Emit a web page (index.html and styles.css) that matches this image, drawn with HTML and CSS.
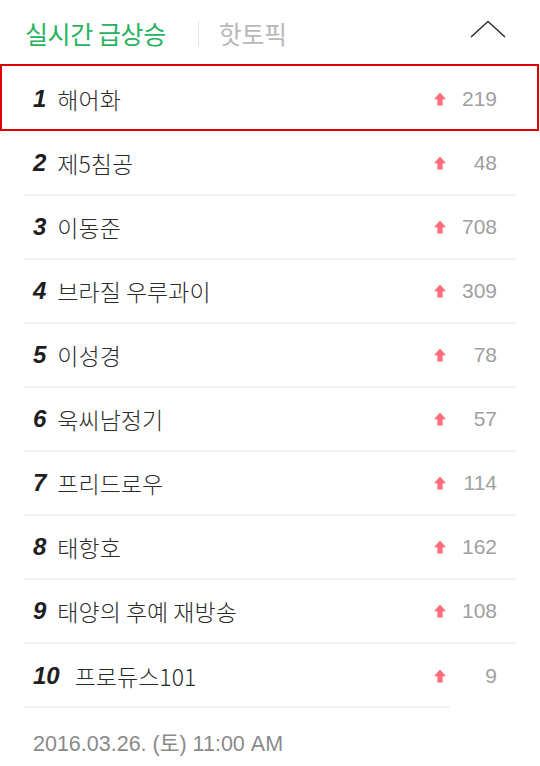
FILE: index.html
```html
<html>

<head>
    <meta charset="utf-8">
    <link rel="stylesheet" href="styles.css">
</head>

<body>
    <div class="panel">
        <div class="tabs">
            <span class="tab active">실시간 급상승</span>
            <span class="bar"></span>
            <span class="tab">핫토픽</span>
            <svg class="fold" width="36" height="18" viewBox="0 0 36 18">
                <polyline points="1,17 18,1.5 35,17" fill="none" stroke="#333" stroke-width="1.6" />
            </svg>
        </div>
        <ul class="ranking">
            <li class="picked"><b>1</b><span class="word">해어화</span><i class="up"></i><span class="cnt">219</span></li>
            <li><b>2</b><span class="word">제5침공</span><i class="up"></i><span class="cnt">48</span></li>
            <li><b>3</b><span class="word">이동준</span><i class="up"></i><span class="cnt">708</span></li>
            <li><b>4</b><span class="word">브라질 우루과이</span><i class="up"></i><span class="cnt">309</span></li>
            <li><b>5</b><span class="word">이성경</span><i class="up"></i><span class="cnt">78</span></li>
            <li><b>6</b><span class="word">욱씨남정기</span><i class="up"></i><span class="cnt">57</span></li>
            <li><b>7</b><span class="word">프리드로우</span><i class="up"></i><span class="cnt">114</span></li>
            <li><b>8</b><span class="word">태항호</span><i class="up"></i><span class="cnt">162</span></li>
            <li><b>9</b><span class="word">태양의 후예 재방송</span><i class="up"></i><span class="cnt">108</span></li>
            <li><b>10</b><span class="word">프로듀스101</span><i class="up"></i><span class="cnt">9</span></li>
        </ul>
        <div class="stamp">2016.03.26. (토) 11:00 AM</div>
    </div>
</body>

</html>
```

FILE: styles.css
```css
body {
    margin: 0;
    background: #fff;
    font-family: "Liberation Sans", "Noto Sans CJK KR", sans-serif;
}

.panel {
    width: 540px;
}

.tabs {
    height: 64px;
    display: flex;
    align-items: center;
    padding: 2px 34px 0 25px;
    box-sizing: border-box;
}

.tab {
    font-family: "Noto Sans CJK KR", sans-serif;
    font-size: 25px;
    font-weight: 400;
    color: #b8b8b8;
    letter-spacing: -0.4px;
}

.tab.active {
    color: #27b35c;
}

.bar {
    width: 1px;
    height: 25px;
    background: #e2e2e2;
    margin: 0 20px 0 32px;
}

.fold {
    margin-left: auto;
    margin-top: -8px;
}

.ranking {
    list-style: none;
    margin: 0;
    padding: 0 24px;
}

.ranking li {
    position: relative;
    height: 62px;
    display: flex;
    align-items: center;
    padding: 0 19px 0 9px;
    border-bottom: 2px solid #f3f3f3;
}

.ranking li.picked {
    height: 66px;
    border-bottom: none;
    margin-top: 2px;
}

.ranking li.picked::before {
    content: "";
    position: absolute;
    left: -24px;
    right: -23px;
    top: -2px;
    bottom: 1px;
    border: 2.5px solid #e00000;
}

.ranking li:last-child {
    border-bottom: none;
    height: 64px;
}

.ranking li:last-child::after {
    content: "";
    position: absolute;
    left: 0;
    bottom: 0;
    width: 426px;
    height: 2px;
    background: #f3f3f3;
}

.ranking b {
    font-style: italic;
    font-weight: bold;
    font-size: 24px;
    color: #1e1e1e;
    margin-right: 11px;
}

.ranking li:last-child b {
    margin-right: 15px;
}

.word {
    font-family: "Noto Sans CJK KR", sans-serif;
    font-size: 23px;
    font-weight: 300;
    color: #2a2a2a;
    flex: 1;
}

.up {
    width: 12px;
    height: 13px;
    margin-right: 1px;
    background: #ff6b7c;
    clip-path: polygon(50% 0, 100% 52%, 72% 52%, 72% 100%, 28% 100%, 28% 52%, 0 52%);
}

.cnt {
    width: 50px;
    text-align: right;
    font-size: 21px;
    color: #a0a0a0;
}

.stamp {
    height: 66px;
    display: flex;
    align-items: center;
    padding-left: 33px;
    font-size: 21.5px;
    color: #8a8a8a;
}
```
